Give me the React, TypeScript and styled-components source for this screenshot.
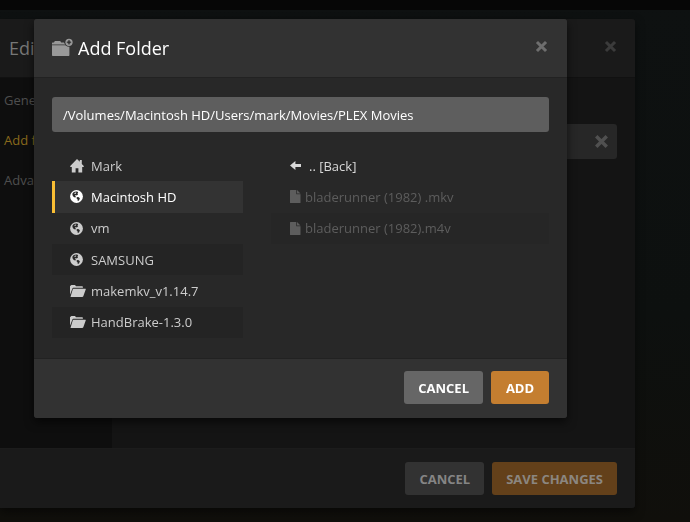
import React from "react";
import styled, { createGlobalStyle, css } from "styled-components";

const GlobalStyle = createGlobalStyle`
  *, *::before, *::after { box-sizing: border-box; }
  html, body { margin: 0; min-height: 100%; background: #0e1111; }
  body {
    font-family: "Open Sans", "Noto Sans", sans-serif;
    font-size: 13px;
    line-height: 20px;
    color: #ccc;
    overflow: hidden;
  }
  button, input { font: inherit; }
  h1, h2, ul { margin: 0; padding: 0; font-weight: 400; list-style: none; }
`;

const Page = styled.main`
  min-height: 100vh;
  background: linear-gradient(#0e1111, #0d100f 60%, #100f0b);
`;

const TopBar = styled.div`
  height: 10px;
  background: #060606;
`;

const Overlay = styled.div<{ $level: "back" | "front" }>`
  position: fixed;
  inset: 0;
  padding: ${(p) => (p.$level === "front" ? "19px 123px 0 34px" : "19px 55px 0 0")};
`;

const Dialog = styled.section<{ $level: "back" | "front" }>`
  display: flex;
  flex-direction: column;
  overflow: hidden;
  ${(p) =>
    p.$level === "front"
      ? css`
          border-radius: 3px;
          background: #282828;
          box-shadow: 0 4px 10px rgba(0, 0, 0, 0.6);
        `
      : css`
          border-radius: 0 3px 3px 0;
          background: #141414;
          box-shadow: 0 4px 10px rgba(0, 0, 0, 0.5);
        `}
`;

const Header = styled.header<{ $dim?: boolean }>`
  display: flex;
  align-items: center;
  justify-content: space-between;
  height: 59px;
  padding: ${(p) => (p.$dim ? "0 18px 0 9px" : "0 19px 0 18px")};
  border-bottom: 1px solid ${(p) => (p.$dim ? "#111" : "#222")};
  background: ${(p) => (p.$dim ? "#1a1a1a" : "#323232")};
`;

const Title = styled.h1<{ $dim?: boolean }>`
  display: flex;
  align-items: center;
  gap: 5px;
  font-size: 18px;
  line-height: 24px;
  color: ${(p) => (p.$dim ? "#777" : "#fff")};
`;

const IconButton = styled.button<{ $dim?: boolean }>`
  display: grid;
  place-items: center;
  padding: 0;
  border: 0;
  background: none;
  color: ${(p) => (p.$dim ? "#3b3b3b" : "#6e6e6e")};
  cursor: pointer;
`;

const CloseButton = styled(IconButton)`
  width: 14px;
  height: 14px;
  margin-bottom: 3px;
`;

const RemoveButton = styled(IconButton)`
  color: #505050;
`;

const Footer = styled.footer<{ $dim?: boolean }>`
  display: flex;
  justify-content: flex-end;
  gap: 8px;
  height: 60px;
  padding: ${(p) => (p.$dim ? 13 : 12)}px 18px 0;
  border-top: 1px solid ${(p) => (p.$dim ? "#1c1c1c" : "#222")};
  background: ${(p) => (p.$dim ? "#1a1a1a" : "#323232")};
`;

const buttonColors = {
  plain: ["#666", "#fff"],
  accent: ["#c47e30", "#fff"],
  plainDim: ["#323232", "#858585"],
  accentDim: ["#63401a", "#8b8680"],
};

const Button = styled.button<{ $tone: keyof typeof buttonColors }>`
  height: 33px;
  min-width: 58px;
  padding: 0 14px;
  border: 0;
  border-radius: 3px;
  background: ${(p) => buttonColors[p.$tone][0]};
  color: ${(p) => buttonColors[p.$tone][1]};
  font-weight: 700;
  white-space: nowrap;
  cursor: pointer;
`;

const EditBody = styled.div`
  display: grid;
  grid-template-columns: 112px 1fr;
  min-height: 370px;
`;

const SideNav = styled.nav`
  display: flex;
  flex-direction: column;
  gap: 20px;
  padding: 12px 0 0 4px;
  background: #0e0e0e;
`;

const NavLink = styled.a<{ $active?: boolean }>`
  color: ${(p) => (p.$active ? "#8a6a1c" : "#4e4e4e")};
  text-decoration: none;
`;

const EditContent = styled.div`
  padding: 46px 18px 0;
`;

const FolderField = styled.div`
  display: flex;
  align-items: center;
  justify-content: flex-end;
  height: 35px;
  padding: 0 8px;
  border-radius: 3px;
  background: #272727;
`;

const FrontBody = styled.div`
  display: flex;
  flex-direction: column;
  gap: 18px;
  padding: 19px 18px 20px;
`;

const PathInput = styled.input`
  width: 100%;
  height: 35px;
  padding: 0 11px;
  border: 0;
  border-radius: 3px;
  background: #5e5e5e;
  color: #fff;
  outline: none;
`;

const Browser = styled.div`
  display: grid;
  grid-template-columns: 191px 1fr;
  gap: 28px;
`;

const List = styled.ul`
  display: grid;
  grid-template-rows: repeat(6, 1fr);
  min-height: 188px;
`;

const rowStates = {
  normal: css`
    color: #ccc;
  `,
  back: css`
    padding-left: 16px;
    color: #d8d8d8;
  `,
  selected: css`
    background: #333;
    border-left-color: #f9be34;
    color: #fff;
  `,
  disabled: css`
    padding-left: 16px;
    color: #5d5d5d;
  `,
};

const stripes = { none: "transparent", faint: "#262626", solid: "#242424" };

const Row = styled.button<{
  $state: keyof typeof rowStates;
  $gap: number;
  $stripe?: keyof typeof stripes;
}>`
  display: flex;
  align-items: center;
  gap: ${(p) => p.$gap}px;
  width: 100%;
  height: 100%;
  padding: 0 0 0 15px;
  border: 0;
  border-left: 3px solid transparent;
  background: ${(p) => stripes[p.$stripe ?? "none"]};
  text-align: left;
  white-space: nowrap;
  cursor: pointer;
  ${(p) => rowStates[p.$state]}
`;

const IconSlot = styled.span<{ $wide?: boolean }>`
  display: flex;
  width: ${(p) => (p.$wide ? 16 : 11)}px;
`;

const Cross = ({ size }: { size: number }) => (
  <svg width={size} height={size} viewBox="0 0 12 12" aria-hidden="true">
    <path d="M1.8 1.8L10.2 10.2M10.2 1.8L1.8 10.2" stroke="currentColor" strokeWidth="2.8" />
  </svg>
);

const AddFolderIcon = () => (
  <svg width="21" height="20" viewBox="0 0 21 20" fill="#999" aria-hidden="true">
    <path d="M0 6.4V5Q0 4.4.6 4.4H2L2.8 3H8.2L9.2 4.4H12Q12.5 5.6 13.8 6.4Z" />
    <path d="M0 7.2H17.4V17.3Q17.4 18 16.7 18H.7Q0 18 0 17.3Z" />
    <circle cx="17" cy="4.3" r="4.5" fill="#323232" />
    <circle cx="17" cy="4.3" r="3.6" />
    <path d="M17 2.1Q17.5 3.8 19.2 4.3Q17.5 4.8 17 6.5Q16.5 4.8 14.8 4.3Q16.5 3.8 17 2.1Z" fill="#323232" stroke="#323232" strokeWidth=".5" />
  </svg>
);

const HomeIcon = () => (
  <svg width="14" height="14" viewBox="0 0 14 14" fill="currentColor" aria-hidden="true">
    <path d="M7 0L9.8 2.8V1H11.8V4.9L14 7.3L13.4 8H12.2V13.5H8.4V9.2H5.6V13.5H1.8V8H.6L0 7.3Z" />
  </svg>
);

const GlobeIcon = () => (
  <svg width="13" height="13" viewBox="0 0 13 13" aria-hidden="true">
    <circle cx="6.5" cy="6.5" r="6.4" fill="currentColor" />
    <path
      d="M3.2 2.6Q4.9 1.2 7.2 1.5L8.2 2.4L7.5 3.4L8 4.4L6.8 5.4L5.7 5.1L5 6.1L6.1 6.7L5.3 7.5L3.7 6.9L2.5 5.3L2.4 3.8ZM6.9 7.1L8.9 7.3L9.9 8.5L8.9 10.5L7.8 10.9L7.5 9.3L6.5 8.3Z"
      fill="#292929"
    />
    <path d="M5.1 2.4L6.4 2.7L5.3 3.9L4.1 3.4Z" fill="currentColor" />
  </svg>
);

const OpenFolderIcon = () => (
  <svg width="16" height="12" viewBox="0 0 16 12" fill="currentColor" aria-hidden="true">
    <path d="M0 9.8V1.3Q0 .8.5.8L1.4 0H5L6 1.2H12.2Q12.9 1.2 12.9 1.9V2.8H3.4Q2.7 2.8 2.4 3.5Z" />
    <path d="M3.4 3.7H15.4Q16 3.7 15.8 4.3L13.3 11.2Q13 12 12.2 12H1Q.4 12 .6 11.4L2.8 4.2Q2.9 3.7 3.4 3.7Z" />
  </svg>
);

const ArrowIcon = () => (
  <svg width="11" height="9" viewBox="0 0 11 9" fill="currentColor" aria-hidden="true">
    <path d="M0 4.5L5.4 0V2.9H11V6.1H5.4V9Z" />
  </svg>
);

const FileIcon = () => (
  <svg width="11" height="13" viewBox="0 0 11 13" fill="currentColor" aria-hidden="true">
    <path d="M0 .5Q0 0 .5 0H6.3V4.2H10.5V12.5Q10.5 13 10 13H.5Q0 13 0 12.5Z" />
    <path d="M7 0L10.5 3.5H7Z" />
  </svg>
);

const places = [
  { name: "Mark", icon: <HomeIcon /> },
  { name: "Macintosh HD", icon: <GlobeIcon />, selected: true },
  { name: "vm", icon: <GlobeIcon /> },
  { name: "SAMSUNG", icon: <GlobeIcon /> },
  { name: "makemkv_v1.14.7", icon: <OpenFolderIcon /> },
  { name: "HandBrake-1.3.0", icon: <OpenFolderIcon /> },
];

const files = ["bladerunner (1982) .mkv", "bladerunner (1982).m4v"];

const EditLibraryDialog = () => (
  <Overlay $level="back">
    <Dialog $level="back" aria-label="Edit library">
      <Header $dim>
        <Title as="h2" $dim>Edi</Title>
        <CloseButton $dim aria-label="Close edit dialog"><Cross size={13} /></CloseButton>
      </Header>
      <EditBody>
        <SideNav>
          <NavLink href="#general">Gene</NavLink>
          <NavLink href="#folders" $active>Add f</NavLink>
          <NavLink href="#advanced">Adva</NavLink>
        </SideNav>
        <EditContent>
          <FolderField>
            <RemoveButton aria-label="Remove folder"><Cross size={15} /></RemoveButton>
          </FolderField>
        </EditContent>
      </EditBody>
      <Footer $dim>
        <Button $tone="plainDim">CANCEL</Button>
        <Button $tone="accentDim">SAVE CHANGES</Button>
      </Footer>
    </Dialog>
  </Overlay>
);

const AddFolderDialog = () => (
  <Overlay $level="front">
    <Dialog $level="front" role="dialog" aria-label="Add Folder">
      <Header>
        <Title><AddFolderIcon />Add Folder</Title>
        <CloseButton aria-label="Close"><Cross size={13} /></CloseButton>
      </Header>
      <FrontBody>
        <PathInput
          aria-label="Folder path"
          defaultValue="/Volumes/Macintosh HD/Users/mark/Movies/PLEX Movies"
        />
        <Browser>
          <List>
            {places.map((place, i) => (
              <li key={place.name}>
                <Row
                  $state={place.selected ? "selected" : "normal"}
                  $gap={5}
                  $stripe={i % 2 === 1 ? "solid" : "none"}
                >
                  <IconSlot $wide>{place.icon}</IconSlot>
                  {place.name}
                </Row>
              </li>
            ))}
          </List>
          <List>
            <li>
              <Row $state="back" $gap={8}>
                <IconSlot><ArrowIcon /></IconSlot>
                .. [Back]
              </Row>
            </li>
            {files.map((file, i) => (
              <li key={file}>
                <Row $state="disabled" $gap={4} $stripe={i % 2 === 1 ? "faint" : "none"} disabled>
                  <IconSlot><FileIcon /></IconSlot>
                  {file}
                </Row>
              </li>
            ))}
          </List>
        </Browser>
      </FrontBody>
      <Footer>
        <Button $tone="plain">CANCEL</Button>
        <Button $tone="accent">ADD</Button>
      </Footer>
    </Dialog>
  </Overlay>
);

export default function App() {
  return (
    <>
      <GlobalStyle />
      <Page>
        <TopBar />
        <EditLibraryDialog />
        <AddFolderDialog />
      </Page>
    </>
  );
}
